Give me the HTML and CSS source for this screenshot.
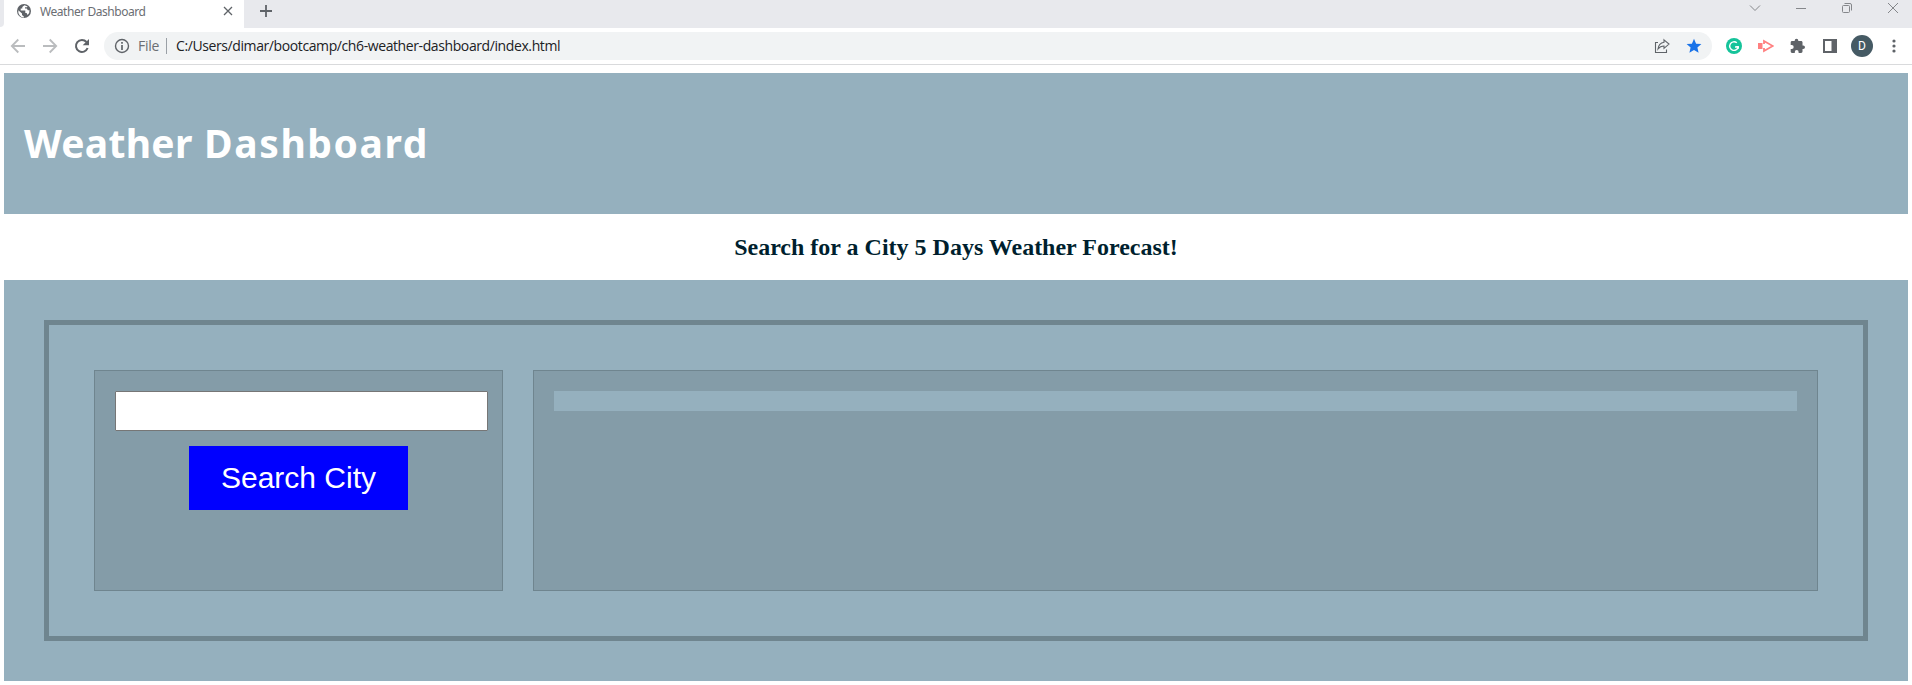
FILE: index.html
```html
<!DOCTYPE html>
<html lang="en">
<head>
<meta charset="utf-8">
<title>Weather Dashboard</title>
<link rel="stylesheet" href="styles.css">
</head>
<body>
<div class="tabstrip">
  <div class="edge"></div>
  <div class="tab">
    <svg class="globe" width="16" height="16" viewBox="0 0 16 16"><circle cx="8" cy="8" r="7" fill="#5f6368"/><path d="M2.300 7.300L6 10.400V12l2 1.800v.8A6.300 6.300 0 0 1 2.300 7.300zM8.500 2.200L6.300 4v1.600H4.700v2h4.600v2.300h1.300l1 2.200a5.600 5.600 0 0 0 1.900-4.900h-1.600l-1.200-1.700H9V4.300h2l.6-.9z" fill="#fff"/></svg>
    <span class="tab-title">Weather Dashboard</span>
    <svg class="tab-close" width="10" height="10" viewBox="0 0 10 10"><path d="M1 1l8 8M9 1L1 9" stroke="#5f6368" stroke-width="1.300"/></svg>
  </div>
  <svg class="tab-new" width="14" height="14" viewBox="0 0 14 14"><path d="M7 1v12M1 7h12" stroke="#5f6368" stroke-width="1.800"/></svg>
  <div class="window-buttons">
    <svg width="12" height="16" viewBox="0 0 12 16"><path d="M1 5.500l5 5 5-5" fill="none" stroke="#85878b"/></svg>
    <svg width="12" height="16" viewBox="0 0 12 16"><path d="M1 8.500h10" stroke="#85878b"/></svg>
    <svg width="12" height="16" viewBox="0 0 12 16"><rect x="1.500" y="5.500" width="7" height="7" rx="1" fill="none" stroke="#85878b"/><path d="M3.500 3.500H9a1.500 1.500 0 0 1 1.500 1.500v5.500" fill="none" stroke="#85878b"/></svg>
    <svg width="12" height="16" viewBox="0 0 12 16"><path d="M1 3l10 10M11 3L1 13" stroke="#85878b"/></svg>
  </div>
</div>
<div class="toolbar">
  <svg class="nav" width="16" height="16" viewBox="0 0 16 16"><path d="M15 8H2.500M8.300 1.500L1.800 8l6.500 6.500" fill="none" stroke="#babcbe" stroke-width="1.800"/></svg>
  <svg class="nav" width="16" height="16" viewBox="0 0 16 16"><path d="M1 8h12.500M7.700 1.500L14.200 8l-6.500 6.500" fill="none" stroke="#babcbe" stroke-width="1.800"/></svg>
  <svg class="nav" width="16" height="16" viewBox="0 0 16 16"><path d="M13.600 10A6 6 0 1 1 12.500 4" fill="none" stroke="#5f6368" stroke-width="2"/><path d="M15 1v6.300H8.700z" fill="#5f6368"/></svg>
  <div class="omnibox">
    <svg width="16" height="16" viewBox="0 0 16 16"><circle cx="8" cy="8" r="6.500" fill="none" stroke="#5f6368" stroke-width="1.400"/><path d="M8 7v5M8 4v1.800" stroke="#5f6368" stroke-width="1.700"/></svg>
    <span class="scheme">File</span>
    <span class="divider"></span>
    <span class="url">C:/Users/dimar/bootcamp/ch6-weather-dashboard/index.html</span>
    <svg class="share" width="16" height="16" viewBox="0 0 16 16"><path d="M4 4.500H1.500v10h11v-3" fill="none" stroke="#5f6368" stroke-width="1.100"/><path d="M10 1.800l5 4.300-5 4.300V8C7.300 8 5.500 9 4 11c.4-3.400 2.500-6.300 6-6.800z" fill="none" stroke="#5f6368" stroke-width="1.100"/></svg>
    <svg class="star" width="16" height="16" viewBox="0 0 16 16"><path d="M8 .7l2.100 5 5.300.4-4 3.500 1.200 5.200L8 12l-4.600 2.800 1.200-5.200-4-3.500 5.300-.4z" fill="#1a73e8"/></svg>
  </div>
  <div class="extensions">
    <svg width="16" height="16" viewBox="0 0 16 16"><circle cx="8" cy="8" r="8" fill="#15c39a"/><path d="M10.800 4.800A4.300 4.300 0 1 0 12.200 9H9" fill="none" stroke="#fff" stroke-width="1.400"/><path d="M10.200 8.500h2.300v2.200" fill="none" stroke="#fff"/></svg>
    <svg width="16" height="16" viewBox="0 0 16 16"><path d="M0 5h4.500v6H0z" fill="#ff8080"/><path d="M6 6V3l8.800 5L6 13v-3" fill="none" stroke="#ff8080" stroke-width="1.800"/></svg>
    <svg width="16" height="16" viewBox="0 0 16 16"><path d="M13.200 7.500h-.7V4.300c0-.8-.6-1.400-1.400-1.400H8.300V2.500a1.800 1.800 0 0 0-3.600 0v.4H2C1.300 2.900.7 3.500.7 4.300v2.600h1a2 2 0 0 1 0 4h-1v2.700c0 .8.600 1.400 1.300 1.400h2.800v-1a1.900 1.900 0 0 1 3.800 0v1h2.500c.8 0 1.400-.6 1.400-1.400v-2.500h.7a1.800 1.800 0 0 0 0-3.600z" fill="#5f6368"/></svg>
    <svg width="16" height="16" viewBox="0 0 16 16"><path d="M1 1h14v14H1zM3 3v10h6.500V3z" fill="#5f6368" fill-rule="evenodd"/></svg>
    <span class="avatar">D</span>
    <svg class="kebab" width="4" height="14" viewBox="0 0 4 14"><g fill="#5f6368"><circle cx="2" cy="2" r="1.600"/><circle cx="2" cy="7" r="1.600"/><circle cx="2" cy="12" r="1.600"/></g></svg>
  </div>
</div>
<main class="page">
  <header class="banner"><h1>Weather <span class="wide">Dashboard</span></h1></header>
  <h2 class="tagline"><span>Search for a City 5 Days Weather Forecast!</span></h2>
  <section class="content">
    <div class="frame">
      <form class="search">
        <input class="city" type="text" aria-label="City">
        <button class="submit" type="button">Search City</button>
      </form>
      <div class="results"><div class="current"></div></div>
    </div>
  </section>
</main>
</body>
</html>
```
FILE: styles.css
```css
* { box-sizing: border-box; }
body { margin: 0; height: 685px; overflow: hidden; background: #fff; font-family: "Open Sans", "Noto Sans", sans-serif; }
svg { display: block; flex: none; }

.tabstrip { display: flex; height: 28px; background: linear-gradient(#e8e9ed, #e8e9ed) 4px 0 no-repeat #fff; }
.edge { width: 4px; height: 27px; background: #e8e9ed; border-bottom-right-radius: 4px; }
.tab { display: flex; align-items: center; width: 240px; height: 28px; padding: 0 11px 6px 12px; background: #fff; }
.tab-title { margin-left: 8px; flex: 1; font-size: 12px; letter-spacing: -0.45px; color: #6b6e73; white-space: nowrap; font-family: "Noto Sans", sans-serif; }
.tab-new { margin: 4px 0 0 15px; }
.window-buttons { display: flex; gap: 34px; margin-left: auto; padding-right: 13px; }

.toolbar { display: flex; align-items: center; height: 37px; padding: 0 11px 1px 10px; border-bottom: 1px solid #d9dadc; }
.nav { margin-right: 16px; }
.omnibox { display: flex; align-items: center; flex: 1; height: 28px; margin: 0 14px 0 -2px; padding: 0 10px; border-radius: 14px; background: #f1f3f4; font-size: 14px; line-height: 20px; }
.scheme { margin-left: 8px; width: 21px; letter-spacing: -0.3px; color: #6b6e73; }
.divider { width: 1px; height: 16px; margin: 0 9px 0 7px; background: #9aa0a6; }
.url { color: #202124; letter-spacing: -0.4px; white-space: nowrap; }
.share { margin-left: auto; }
.star { margin-left: 16px; }
.extensions { display: flex; align-items: center; gap: 16px; }
.avatar { width: 22px; height: 22px; margin: 0 -3px; border-radius: 50%; background: #455a64; color: #fff; font: 12px/22px Roboto, sans-serif; text-align: center; }
.kebab { margin-left: 6px; margin-right: 5px; }

.page { padding: 8px 4px 4px; }
.banner { height: 141px; padding: 40px 20px; background: #95b0be; }
.banner h1 { margin: 0; font: bold 39px/60px "Noto Sans", sans-serif; letter-spacing: 0.3px; word-spacing: 1px; color: #fff; }
.wide { letter-spacing: 1.6px; }
.tagline { display: flex; align-items: center; justify-content: center; height: 66px; margin: 0; font: bold 24px/28px "Liberation Serif", serif; color: #001f2e; }
.content { height: 401px; padding: 40px; background: #95b0be; }
.frame { display: flex; gap: 30px; height: 321px; padding: 45px; border: 5px solid #6f858f; }
.search { display: flex; flex-direction: column; align-items: center; width: 409px; height: 221px; padding: 20px 14px 20px 20px; border: 1px solid #6f858f; background: #849ca8; }
.city { width: 373px; height: 40px; border: 1px solid #767676; border-radius: 1px; background: #fff; }
.submit { width: 219px; height: 64px; margin: 15px 6px 0 0; padding: 0; border: 0; background: #00f; color: #fff; font: 30px/64px "Liberation Sans", sans-serif; }
.results { flex: 1; height: 221px; padding: 20px; border: 1px solid #6f858f; background: #849ca8; }
.current { height: 20px; background: #95b0be; }
```
